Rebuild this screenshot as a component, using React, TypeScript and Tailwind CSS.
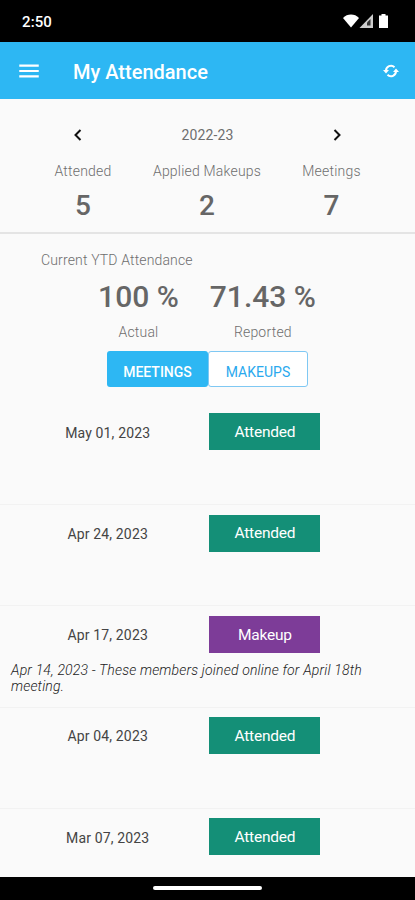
import React from 'react'
import { MdMenu } from 'react-icons/md'

const totals = [
  { label: 'Attended', value: '5', width: 'w-[166px]' },
  { label: 'Applied Makeups', value: '2', width: 'w-[82px]' },
  { label: 'Meetings', value: '7', width: 'w-[167px]' },
]

const records = [
  { date: 'May 01, 2023', status: 'Attended' },
  { date: 'Apr 24, 2023', status: 'Attended' },
  {
    date: 'Apr 17, 2023',
    status: 'Makeup',
    note: 'Apr 14, 2023 - These members joined online for April 18th meeting.',
  },
  { date: 'Apr 04, 2023', status: 'Attended' },
  { date: 'Mar 07, 2023', status: 'Attended' },
]

function StatusBar() {
  return (
    <div className="flex h-[42px] shrink-0 items-center justify-between bg-black pl-[22px] pr-[26px] text-white">
      <span className="pt-0.5 text-[15px] font-medium tracking-[0.1px]">2:50</span>
      <svg width="46" height="14" viewBox="0 0 46 14" fill="currentColor">
        <path d="M0 4C4.300 -.6 11.700 -.6 16 4L8 13.500Z" />
        <path d="M30 0V14H16.500Z" fillOpacity="0.8" />
        <path d="M27.500 5V11.500H24V8.500Z" fill="#000" fillOpacity="0.75" />
        <path d="M38.500 0H42.500V1.500H45V14H36V1.500H38.500Z" />
      </svg>
    </div>
  )
}

function SyncIcon() {
  return (
    <svg width="16" height="14" viewBox="0 0 16 14" fill="none">
      <path d="M3 7A5 5 0 0 1 11.500 3.200" stroke="currentColor" strokeWidth="2" />
      <path d="M13 7A5 5 0 0 1 4.500 10.800" stroke="currentColor" strokeWidth="2" />
      <path d="M0 6H6L3 9.500Z" fill="currentColor" />
      <path d="M16 8H10L13 4.500Z" fill="currentColor" />
    </svg>
  )
}

function YearPicker() {
  return (
    <div className="flex h-5 items-center justify-between pl-[73px] pr-[73px]">
      <button aria-label="Previous year">
        <svg width="9" height="12" viewBox="0 0 9 12" fill="none" stroke="#111" strokeWidth="2">
          <path d="M7.500 1L2.500 6L7.500 11" />
        </svg>
      </button>
      <span className="text-[14px] tracking-[0.1px]">2022-23</span>
      <button aria-label="Next year">
        <svg width="9" height="12" viewBox="0 0 9 12" fill="none" stroke="#111" strokeWidth="2">
          <path d="M1.500 1L6.500 6L1.500 11" />
        </svg>
      </button>
    </div>
  )
}

export default function App() {
  return (
    <main className="flex h-[900px] w-[415px] flex-col overflow-hidden bg-[#fafafa] font-[Roboto,sans-serif] text-[#6e6e6e]">
      <StatusBar />

      {/* App bar */}
      <header className="flex h-[57px] shrink-0 items-center bg-[#2db7f3] pl-4 pr-4 text-white">
        <MdMenu className="h-[26px] w-[26px]" />
        <h1 className="ml-[31px] mt-0.5 flex-1 text-[20px] font-medium">My Attendance</h1>
        <SyncIcon />
      </header>

      {/* Yearly totals */}
      <section className="h-[135px] shrink-0 border-b-2 border-[#e4e4e4] pt-[26px]">
        <YearPicker />
        <div className="mt-4 flex">
          {totals.map((item) => (
            <div key={item.label} className={`flex flex-col items-center ${item.width}`}>
              <span className="whitespace-nowrap text-[14px] font-light leading-5 tracking-[0.2px]">{item.label}</span>
              <span className="mt-[9px] text-[28px] font-medium leading-8 text-[#666]">{item.value}</span>
            </div>
          ))}
        </div>
      </section>

      {/* Year to date */}
      <section className="shrink-0 pt-4">
        <p className="pl-[41px] text-[14px] font-light leading-5 tracking-[0.15px]">Current YTD Attendance</p>
        <div className="mr-px mt-[9px] flex justify-center gap-[31px]">
          <div className="flex flex-col items-center">
            <span className="text-[30px] font-medium leading-9 text-[#666]">100 %</span>
            <span className="mt-[7px] text-[14px] font-light leading-5 tracking-[0.2px]">Actual</span>
          </div>
          <div className="flex flex-col items-center">
            <span className="text-[30px] font-medium leading-9 text-[#666]">71.43 %</span>
            <span className="mt-[7px] text-[14px] font-light leading-5 tracking-[0.2px]">Reported</span>
          </div>
        </div>
        <div className="mt-[9px] flex justify-center text-[14px]">
          <button className="h-9 w-[101px] rounded-[3px] bg-[#2db7f3] pt-[6px] font-medium text-white">MEETINGS</button>
          <button className="h-9 w-[100px] rounded-[3px] border border-[#7fc8f3] bg-white pt-[6px] text-[#2aa9ee]">
            MAKEUPS
          </button>
        </div>
      </section>

      {/* Attendance records */}
      <ul className="mt-[17px] min-h-0 flex-1 overflow-hidden">
        {records.map((record) => (
          <li key={record.date} className="h-[101.2px] border-b border-[#f2f2f2] pt-[9.4px]">
            <div className="flex items-center">
              <span className="w-[209.4px] pl-[6px] pt-[3px] text-center text-[14px] tracking-[0.15px] text-[#444]">
                {record.date}
              </span>
              <span
                className={`flex h-[37px] w-[111px] items-center justify-center pt-[2px] text-[15.5px] tracking-[-0.2px] text-white ${
                  record.status === 'Makeup' ? 'bg-[#7d3c98]' : 'bg-[#148f77]'
                }`}
              >
                {record.status}
              </span>
            </div>
            {record.note && (
              <p className="mt-[9px] pl-[11px] pr-10 text-[14px] font-light italic leading-4 tracking-[0.17px] text-[#222]">
                {record.note}
              </p>
            )}
          </li>
        ))}
      </ul>

      {/* Gesture bar */}
      <div className="flex h-[23px] shrink-0 justify-center bg-black pt-[9px]">
        <span className="h-1 w-[109px] rounded-full bg-white" />
      </div>
    </main>
  )
}
